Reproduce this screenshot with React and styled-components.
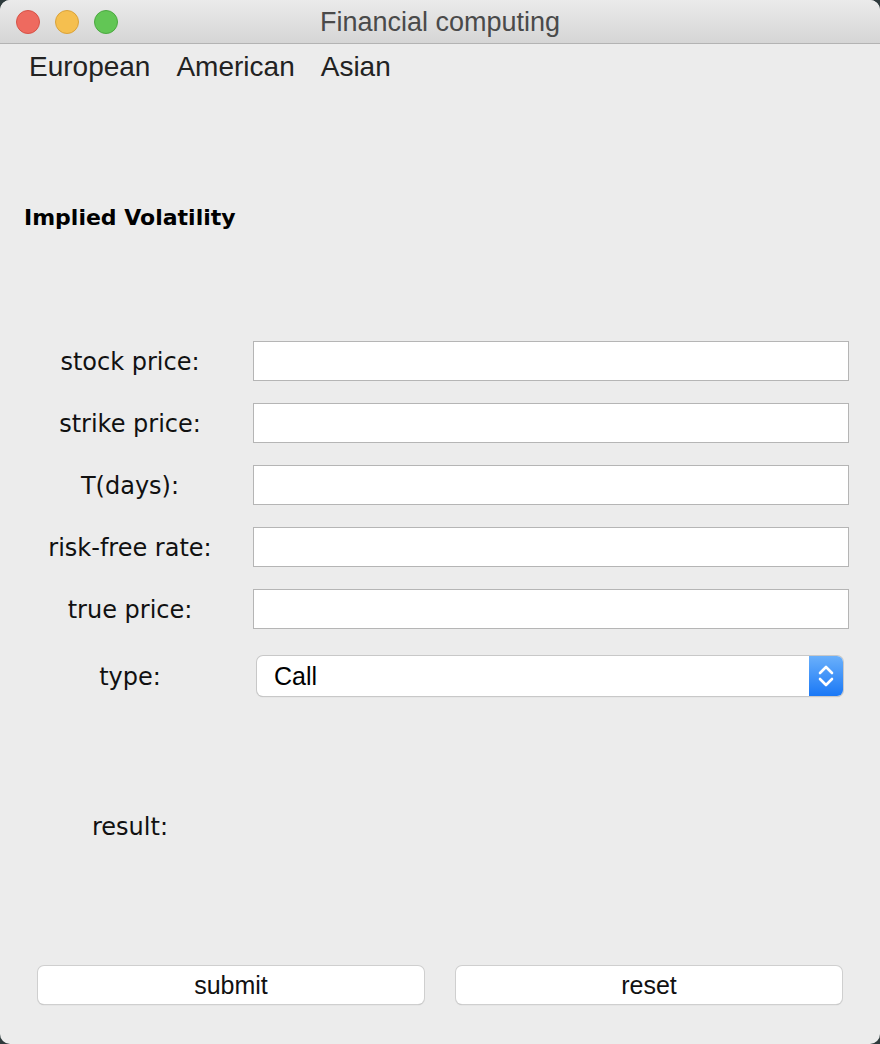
import React from 'react';
import styled, { createGlobalStyle } from 'styled-components';

const GlobalStyle = createGlobalStyle`
  html, body {
    margin: 0;
    padding: 0;
    background: #2e3a3c;
  }
  * {
    box-sizing: border-box;
  }
`;

const Window = styled.div`
  width: 880px;
  height: 1044px;
  background: #ececec;
  border-radius: 10px;
  overflow: hidden;
  display: flex;
  flex-direction: column;
  font-family: "DejaVu Sans", sans-serif;
  color: #111;
`;

const TitleBar = styled.div`
  height: 44px;
  flex: none;
  display: flex;
  align-items: center;
  position: relative;
  background: linear-gradient(#ebebeb, #d5d5d5);
  border-bottom: 1px solid #b3b3b3;
  padding-left: 16px;
  gap: 15px;
`;

const Light = styled.span`
  width: 24px;
  height: 24px;
  border-radius: 50%;
  background: ${p => p.color};
  border: 1px solid ${p => p.edge};
`;

const Title = styled.div`
  position: absolute;
  left: 0;
  right: 0;
  top: 7px;
  text-align: center;
  font-family: "Liberation Sans", Arial, sans-serif;
  font-size: 27px;
  line-height: 31px;
  color: #4a4a4a;
  pointer-events: none;
`;

const MenuBar = styled.div`
  display: flex;
  gap: 26px;
  padding: 7px 0 0 29px;
  height: 46px;
  font-family: "Liberation Sans", Arial, sans-serif;
  font-size: 28px;
  color: #222;
`;

const Heading = styled.div`
  margin: 115px 0 0 24px;
  font-family: "DejaVu Sans", sans-serif;
  font-weight: bold;
  font-size: 22px;
  color: #000;
`;

const Form = styled.div`
  margin-top: 111px;
  display: grid;
  grid-template-columns: 260px 1fr;
  row-gap: 22px;
  padding-right: 31px;
`;

const Label = styled.div`
  display: flex;
  align-items: center;
  justify-content: center;
  font-size: 24px;
  height: 40px;
  padding-top: 2px;
`;

const Input = styled.div`
  margin-left: -7px;
  height: 40px;
  background: #fff;
  border: 1px solid #b5b5b5;
`;

const SelectRow = styled.div`
  margin-top: 5px;
  margin-right: 6px;
  margin-left: -3px;
  height: 40px;
  display: flex;
  background: #fff;
  border-radius: 6px;
  box-shadow: 0 0 0 1px #c8c8c8, 0 1px 1px rgba(0, 0, 0, 0.25);
  overflow: hidden;
`;

const SelectValue = styled.div`
  flex: 1;
  display: flex;
  align-items: center;
  padding-left: 17px;
  font-family: "Liberation Sans", Arial, sans-serif;
  font-size: 25px;
  color: #000;
`;

const SelectArrow = styled.div`
  width: 34px;
  display: flex;
  align-items: center;
  justify-content: center;
  background: linear-gradient(#6ab0fb, #1a78f6);
`;

const ResultRow = styled.div`
  margin-top: 110px;
  display: grid;
  grid-template-columns: 260px 1fr;
`;

const Spacer = styled.div`
  flex: 1;
`;

const ButtonRow = styled.div`
  display: flex;
  gap: 32px;
  padding: 0 38px 40px 38px;
`;

const Button = styled.button`
  flex: 1;
  height: 38px;
  background: #fff;
  border: none;
  border-radius: 6px;
  box-shadow: 0 0 0 1px #cfcfcf, 0 1px 1px rgba(0, 0, 0, 0.3);
  font-family: "Liberation Sans", Arial, sans-serif;
  font-size: 25px;
  color: #111;
  padding: 0;
`;

const fields = ['stock price:', 'strike price:', 'T(days):', 'risk-free rate:', 'true price:'];

const Chevrons = () => (
  <svg width="18" height="26" viewBox="0 0 18 26" fill="none" stroke="#fff" strokeWidth="2.6" strokeLinecap="round" strokeLinejoin="round">
    <path d="M3 10 L9 4 L15 10" />
    <path d="M3 16 L9 22 L15 16" />
  </svg>
);

export default function App() {
  return (
    <>
      <GlobalStyle />
      <Window>
        <TitleBar>
          <Light color="#ee6a5f" edge="#d65247" />
          <Light color="#f5bf4f" edge="#d9a23a" />
          <Light color="#62c655" edge="#4ca841" />
          <Title>Financial computing</Title>
        </TitleBar>
        <MenuBar>
          <span>European</span>
          <span>American</span>
          <span>Asian</span>
        </MenuBar>
        <Heading>Implied Volatility</Heading>
        <Form>
          {fields.map(f => (
            <React.Fragment key={f}>
              <Label>{f}</Label>
              <Input />
            </React.Fragment>
          ))}
          <Label style={{ marginTop: 5 }}>type:</Label>
          <SelectRow>
            <SelectValue>Call</SelectValue>
            <SelectArrow>
              <Chevrons />
            </SelectArrow>
          </SelectRow>
        </Form>
        <ResultRow>
          <Label>result:</Label>
        </ResultRow>
        <Spacer />
        <ButtonRow>
          <Button>submit</Button>
          <Button>reset</Button>
        </ButtonRow>
      </Window>
    </>
  );
}
